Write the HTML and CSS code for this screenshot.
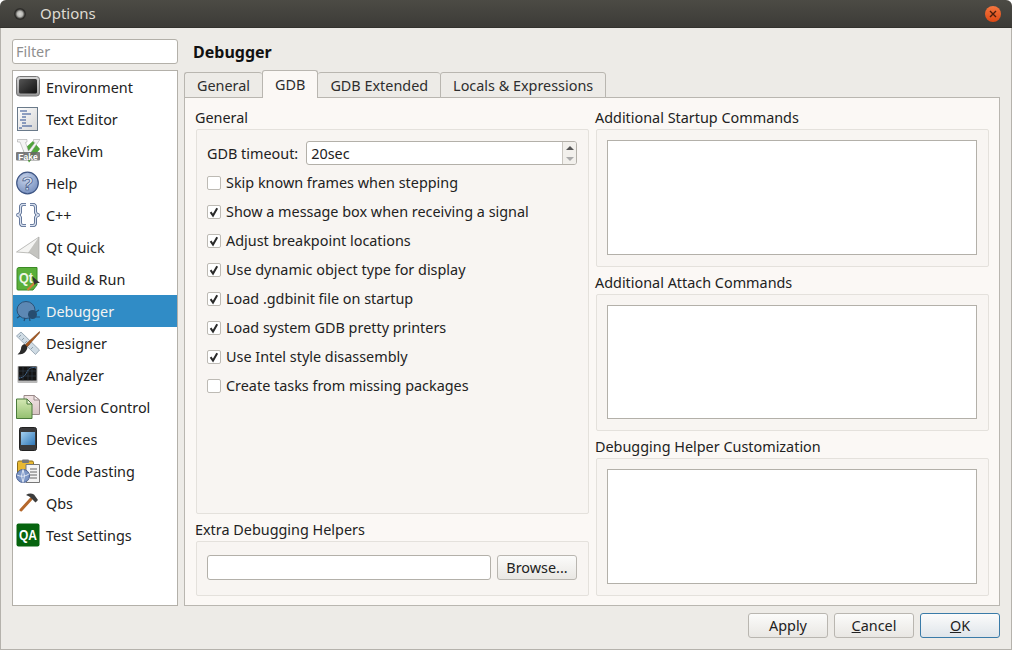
FILE: index.html
```html
<!DOCTYPE html>
<html lang="en">
	<head>
		<meta charset="UTF-8" />
		<title>Options</title>
		<link rel="stylesheet" href="styles.css">
	</head>
	<body>
		<svg class="defs" width="0" height="0">
			<defs>
				<linearGradient id="gScreen" x1="0" y1="0" x2="1" y2="1"><stop offset="0" stop-color="#555"/><stop offset="1" stop-color="#111"/></linearGradient>
				<linearGradient id="gFrame" x1="0" y1="0" x2="0" y2="1"><stop offset="0" stop-color="#d8d8d8"/><stop offset="1" stop-color="#999"/></linearGradient>
				<linearGradient id="gPage" x1="0" y1="0" x2="1" y2="1"><stop offset="0" stop-color="#fff"/><stop offset="1" stop-color="#d4d4d4"/></linearGradient>
				<radialGradient id="gHelp" cx="0.4" cy="0.3" r="0.8"><stop offset="0" stop-color="#c6d3ea"/><stop offset="1" stop-color="#6f89bb"/></radialGradient>
				<linearGradient id="gGreen" x1="0" y1="0" x2="0" y2="1"><stop offset="0" stop-color="#d4e8b4"/><stop offset="1" stop-color="#94c070"/></linearGradient>
				<linearGradient id="gPink" x1="0" y1="0" x2="0" y2="1"><stop offset="0" stop-color="#f2e4e4"/><stop offset="1" stop-color="#d8c4c4"/></linearGradient>
				<linearGradient id="gTablet" x1="0" y1="0" x2="1" y2="1"><stop offset="0" stop-color="#a4d0f0"/><stop offset="1" stop-color="#2f77b8"/></linearGradient>
				<symbol id="tick" viewBox="0 0 14 14"><path d="M3.6 7.2 L6 10.6 L10.2 3.2" fill="none" stroke="#2a2a2a" stroke-width="2"/></symbol>
			</defs>
		</svg>

		<div class="window">
			<header class="titlebar">
				<span class="app-dot"></span>
				<span class="title">Options</span>
				<span class="close"><svg width="8" height="8" viewBox="0 0 8 8"><path d="M1 1 L7 7 M7 1 L1 7" stroke="#4a1d0c" stroke-width="1.4"/></svg></span>
			</header>

			<div class="body">
				<div class="content">
					<aside class="sidebar">
						<input class="filter" type="text" placeholder="Filter" />
						<ul class="nav">
							<li>
								<svg class="icon" viewBox="0 0 24 24"><rect x="0.5" y="1.5" width="23" height="19.5" rx="3" fill="url(#gFrame)" stroke="#777"/><rect x="3" y="4" width="18" height="14.5" rx="1.5" fill="url(#gScreen)"/></svg>
								Environment
							</li>
							<li>
								<svg class="icon" viewBox="0 0 24 24"><rect x="1.5" y="0.5" width="20" height="23" fill="url(#gPage)" stroke="#6a7a8a"/><path d="M4 4h7M6 7h9M6 10h4M4 13h6M6 16h4M6 19h10M3 21h3" stroke="#2a4d8f" stroke-width="1.2"/></svg>
								Text Editor
							</li>
							<li>
								<svg class="icon" viewBox="0 0 24 24"><path d="M7 11 L13 23.5 L24 10 L17 2 Z" fill="#4fa53a"/><path d="M1.5 0.5 H11 V3 L9.5 3.5 L12.5 12 L19 3.5 L17.5 3 V0.5 H24 L13 16 H9 L4 3 L1.5 3 Z" fill="#f4f4f4" stroke="#999" stroke-width="0.5"/><rect x="0" y="13" width="24" height="8.5" rx="1" fill="#666" opacity="0.85"/><text class="fake" x="12" y="20.6">Fake</text></svg>
								FakeVim
							</li>
							<li>
								<svg class="icon" viewBox="0 0 24 24"><circle cx="11.5" cy="12" r="10.8" fill="url(#gHelp)" stroke="#3f5684" stroke-width="1.2"/><text class="help" x="11.5" y="18.5">?</text></svg>
								Help
							</li>
							<li>
								<svg class="icon" viewBox="0 0 24 24"><path d="M10 1.5 H7 Q4.5 1.5 4.5 4.5 V8.5 Q4.5 11 1.5 12 Q4.5 13 4.5 15.5 V19.5 Q4.5 22.5 7 22.5 H10" fill="none" stroke="#4a6088" stroke-width="3"/><path d="M10 1.5 H7 Q4.5 1.5 4.5 4.5 V8.5 Q4.5 11 1.5 12 Q4.5 13 4.5 15.5 V19.5 Q4.5 22.5 7 22.5 H10" fill="none" stroke="#d8e0ee" stroke-width="1.4"/><path d="M14 1.5 H17 Q19.5 1.5 19.5 4.5 V8.5 Q19.5 11 22.5 12 Q19.5 13 19.5 15.5 V19.5 Q19.5 22.5 17 22.5 H14" fill="none" stroke="#4a6088" stroke-width="3"/><path d="M14 1.5 H17 Q19.5 1.5 19.5 4.5 V8.5 Q19.5 11 22.5 12 Q19.5 13 19.5 15.5 V19.5 Q19.5 22.5 17 22.5 H14" fill="none" stroke="#d8e0ee" stroke-width="1.4"/></svg>
								C++
							</li>
							<li>
								<svg class="icon" viewBox="0 0 24 24"><path d="M0.5 17 L23 2 L23 24 L14 18 Z" fill="#e2e2de"/><path d="M0.5 17 L23 2 L12 18 Z" fill="#f4f4f2"/><path d="M12 18 L23 2 L23 24 L14 18 Z" fill="#c4c4c0"/><path d="M0.5 17 L23 2 L23 24 L14 18 Z" fill="none" stroke="#a8a8a4" stroke-width="0.7"/></svg>
								Qt Quick
							</li>
							<li>
								<svg class="icon" viewBox="0 0 24 24"><path d="M3 0.5 H21 V18 L17 23 H2 Q1 23 1 22 V2.5 Q1 0.5 3 0.5 Z" fill="#5aaf3a" stroke="#3b8a25"/><text class="qt" x="10" y="16" textLength="14" lengthAdjust="spacingAndGlyphs">Qt</text><path d="M11.5 23 L20.5 14" stroke="#d0803a" stroke-width="2.2"/><path d="M16 9 L24 16 L20.5 16 L18.5 18 Z" fill="#333"/></svg>
								Build &amp; Run
							</li>
							<li class="active">
								<svg class="icon" viewBox="0 0 24 24"><ellipse cx="10" cy="11" rx="9" ry="8.5" fill="#5d88b4" stroke="#2c5378"/><circle cx="16.5" cy="15.5" r="4.5" fill="#274d70"/><path d="M1 19 L4 17 M8 22 L9 19 M14 22 L13.5 19 M20 18 L24 18 M20 13 L23 11" stroke="#274d70" stroke-width="1.2"/></svg>
								Debugger
							</li>
							<li>
								<svg class="icon" viewBox="0 0 24 24"><path d="M0.5 5 L5 1 L23.5 19 L19.5 23.5 Z" fill="#cfdbe4" stroke="#8a9aa8" stroke-width="0.8"/><path d="M5 4 L3 6 M8 7 L6 9 M11 10 L9 12 M14 13 L12 15 M17 16 L15 18" stroke="#7e8f9c" stroke-width="0.8"/><path d="M23.5 0.5 L10 13 L8 16 L11 16 L23.5 2 Z" fill="#a85a22" stroke="#6e3810" stroke-width="0.5"/><path d="M8.5 13 Q5 14 5 18 Q4.5 21 1.5 23.5 Q8 23.5 10 20 Q12 17 11 15.5 Z" fill="#2a2a2a"/></svg>
								Designer
							</li>
							<li>
								<svg class="icon" viewBox="0 0 24 24"><rect x="1.5" y="3" width="20" height="17" rx="1" fill="#b8b8b8"/><rect x="2.5" y="3.5" width="18" height="14" fill="#141414"/><path d="M3 15 Q8 15 11 9 T20 5" fill="none" stroke="#5a8fc8" stroke-width="1" stroke-dasharray="1.4 0.8"/><path d="M7 3.5v14M12 3.5v14M16 3.5v14M2.5 8h18M2.5 13h18" stroke="#3a4a5a" stroke-width="0.5"/></svg>
								Analyzer
							</li>
							<li>
								<svg class="icon" viewBox="0 0 24 24"><path d="M8 0.5 H18 L23.5 5 V19.5 H8 Z" fill="url(#gPink)" stroke="#9a8a8a"/><path d="M18 0.5 V5 H23.5 Z" fill="#f6f0f0" stroke="#9a8a8a"/><path d="M0.5 4 H11 L16 9 V23.5 H0.5 Z" fill="url(#gGreen)" stroke="#4a7a3a"/><path d="M11 4 V9 H16 Z" fill="#eaf4d8" stroke="#4a7a3a"/></svg>
								Version Control
							</li>
							<li>
								<svg class="icon" viewBox="0 0 24 24"><rect x="3.5" y="0.5" width="17" height="23" rx="2" fill="#3a3a3c" stroke="#222"/><rect x="5" y="5" width="14" height="13" fill="url(#gTablet)"/></svg>
								Devices
							</li>
							<li>
								<svg class="icon" viewBox="0 0 24 24"><rect x="1.5" y="2" width="16" height="17" rx="1.5" fill="#e8b830" stroke="#8a6c18"/><rect x="6" y="0.5" width="7" height="3.5" rx="1" fill="#777"/><path d="M10 5.5 H23.5 V23.5 H10 Z" fill="#f4f4f4" stroke="#777"/><path d="M14 10h7M14 13h7M14 16h7M14 19h7" stroke="#555" stroke-width="0.9"/><circle cx="7" cy="17" r="6.5" fill="#7d97c6" stroke="#4a6091"/><path d="M1 16 Q7 19 13 15 M7 10.5 Q4 17 7 23.5 M7 10.5 Q10 17 7 23.5" fill="none" stroke="#e4ebf6" stroke-width="0.9"/></svg>
								Code Pasting
							</li>
							<li>
								<svg class="icon" viewBox="0 0 24 24"><path d="M5 19 L15 8" stroke="#b5682c" stroke-width="3" stroke-linecap="round"/><path d="M10 4 Q14 1.5 18 3.5 L22 9 L19.5 11.5 L16 8 Q13.5 5 10 4 Z" fill="#3c3c3c"/></svg>
								Qbs
							</li>
							<li>
								<svg class="icon" viewBox="0 0 24 24"><rect x="0.5" y="0.5" width="23" height="23" rx="2" fill="#06640f"/><text class="qa" x="12" y="17" textLength="18" lengthAdjust="spacingAndGlyphs">QA</text></svg>
								Test Settings
							</li>
						</ul>
					</aside>

					<main class="main">
						<h1>Debugger</h1>
						<div class="tabs">
							<span class="tab">General</span>
							<span class="tab current">GDB</span>
							<span class="tab">GDB Extended</span>
							<span class="tab">Locals &amp; Expressions</span>
						</div>
						<div class="panel">
							<div class="column">
								<section class="group grow">
									<h2>General</h2>
									<div class="box general">
										<div class="timeout">
											<label>GDB timeout:</label>
											<div class="spin">
												<span class="spin-value">20sec</span>
												<span class="spin-arrows"><i class="up"></i><i class="down"></i></span>
											</div>
										</div>
										<div class="check"><span class="mark"></span>Skip known frames when stepping</div>
										<div class="check"><span class="mark"><svg width="14" height="14"><use href="#tick"/></svg></span>Show a message box when receiving a signal</div>
										<div class="check"><span class="mark"><svg width="14" height="14"><use href="#tick"/></svg></span>Adjust breakpoint locations</div>
										<div class="check"><span class="mark"><svg width="14" height="14"><use href="#tick"/></svg></span>Use dynamic object type for display</div>
										<div class="check"><span class="mark"><svg width="14" height="14"><use href="#tick"/></svg></span>Load .gdbinit file on startup</div>
										<div class="check"><span class="mark"><svg width="14" height="14"><use href="#tick"/></svg></span>Load system GDB pretty printers</div>
										<div class="check"><span class="mark"><svg width="14" height="14"><use href="#tick"/></svg></span>Use Intel style disassembly</div>
										<div class="check"><span class="mark"></span>Create tasks from missing packages</div>
									</div>
								</section>
								<section class="group">
									<h2>Extra Debugging Helpers</h2>
									<div class="box helpers">
										<div class="path-input"></div>
										<button class="btn browse">Browse...</button>
									</div>
								</section>
							</div>
							<div class="column">
								<section class="group">
									<h2>Additional Startup Commands</h2>
									<div class="box editor-box"><div class="editor h115"></div></div>
								</section>
								<section class="group">
									<h2>Additional Attach Commands</h2>
									<div class="box editor-box"><div class="editor h114"></div></div>
								</section>
								<section class="group">
									<h2>Debugging Helper Customization</h2>
									<div class="box editor-box"><div class="editor h115"></div></div>
								</section>
							</div>
						</div>
					</main>
				</div>

				<footer class="buttons">
					<button class="btn wide">Apply</button>
					<button class="btn wide"><u>C</u>ancel</button>
					<button class="btn wide ok"><u>O</u>K</button>
				</footer>
			</div>
		</div>
	</body>
</html>
```

FILE: styles.css
```css
* {
	box-sizing: border-box;
	margin: 0;
	padding: 0;
}

html,
body {
	width: 1012px;
	height: 650px;
	overflow: hidden;
	background: #fff;
}

body {
	font-family: "Noto Sans", sans-serif;
	font-size: 14.4px;
	color: #222;
}

.defs {
	position: absolute;
}

.window {
	height: 650px;
	display: flex;
	flex-direction: column;
	background: #edebe7;
	border-radius: 6px 6px 0 0;
	overflow: hidden;
}

.titlebar {
	height: 28px;
	flex: none;
	display: flex;
	align-items: center;
	background: linear-gradient(#4c4b45, #3c3b37);
	border-bottom: 1px solid #33322e;
	padding: 0 11px 0 14px;
}

.app-dot {
	width: 12px;
	height: 12px;
	border-radius: 50%;
	background: radial-gradient(circle, #d8d8d4 0, #b8b8b4 32%, #2d2c29 58%);
}

.title {
	margin-left: 14px;
	margin-bottom: 2px;
	color: #dfdbd2;
	font-size: 15px;
}

.close {
	margin-left: auto;
	width: 16px;
	height: 16px;
	border-radius: 50%;
	background: linear-gradient(#f4763f, #dd4814);
	display: flex;
	align-items: center;
	justify-content: center;
}

.body {
	flex: 1;
	display: flex;
	flex-direction: column;
	border: 1px solid #b5b2ac;
	border-top: none;
	padding: 11px 11px 11px;
}

.content {
	height: 567px;
	display: flex;
	gap: 6px;
}

.sidebar {
	width: 166px;
	flex: none;
	display: flex;
	flex-direction: column;
	gap: 6px;
}

.filter {
	height: 25px;
	border: 1px solid #b3b0a9;
	border-radius: 3px;
	padding: 0 3px;
	font: inherit;
	background: #fff;
}

.filter::placeholder {
	color: #8f8f8f;
	opacity: 1;
}

.nav {
	flex: 1;
	list-style: none;
	background: #fff;
	border: 1px solid #b3b0a9;
}

.nav li {
	height: 32px;
	display: flex;
	align-items: center;
	gap: 6px;
	padding-left: 3px;
	white-space: nowrap;
}

.nav li.active {
	background: #308cc6;
	color: #f4f4f2;
}

.icon {
	width: 24px;
	height: 24px;
	flex: none;
}

.icon text {
	font-family: "Liberation Sans", sans-serif;
	text-anchor: middle;
	font-weight: bold;
}

.fake {
	font-size: 8.5px;
	fill: #fff;
}

.help {
	font-size: 19px;
	fill: #d6e0f0;
	stroke: #3f5684;
	stroke-width: 0.7px;
}

.qt {
	font-size: 14px;
	fill: #eef6e4;
}

.qa {
	font-size: 14px;
	fill: #fff;
}

.main {
	flex: 1;
	display: flex;
	flex-direction: column;
	min-width: 0;
}

h1 {
	font-size: 16px;
	font-weight: bold;
	height: 31px;
	line-height: 26px;
	padding-left: 9px;
	color: #111;
}

.tabs {
	display: flex;
	height: 28px;
	position: relative;
	z-index: 1;
	margin-bottom: -1px;
}

.tab {
	height: 26px;
	margin-top: 2px;
	padding: 0 12px;
	border: 1px solid #b9b6b0;
	border-right: none;
	border-radius: 3px 3px 0 0;
	background: #edebe7;
	line-height: 25px;
	color: #2e2e2e;
}

.tab:last-child {
	border-right: 1px solid #b9b6b0;
}

.tab.current {
	height: 28px;
	margin-top: 0;
	background: #fbf8f5;
	border-right: 1px solid #b9b6b0;
	border-bottom: none;
	padding: 0 12px;
	line-height: 27px;
}

.tab.current + .tab {
	border-left: none;
}

.panel {
	flex: 1;
	display: grid;
	grid-template-columns: 393px 393px;
	column-gap: 7px;
	padding: 11px 11px 9px;
	background: #fbf8f5;
	border: 1px solid #b9b6b0;
}

.column {
	display: flex;
	flex-direction: column;
	justify-content: space-between;
}

.group h2 {
	font-size: 14.4px;
	font-weight: normal;
	height: 20px;
	line-height: 18px;
	margin-left: -1px;
	color: #222;
}

.group.grow {
	flex: 1;
	display: flex;
	flex-direction: column;
	margin-bottom: 7px;
}

.box {
	background: #f8f5f2;
	border: 1px solid #e4e1dc;
	border-radius: 2px;
}

.general {
	flex: 1;
	padding: 11px 11px 0 10px;
}

.timeout {
	display: flex;
	align-items: center;
	gap: 8px;
	height: 24px;
	margin-bottom: 3px;
}

.spin {
	flex: 1;
	height: 24px;
	display: flex;
	background: #fff;
	border: 1px solid #b3b0a9;
	border-radius: 3px;
}

.spin-value {
	flex: 1;
	padding-left: 4px;
	line-height: 24px;
}

.spin-arrows {
	width: 14px;
	border-left: 1px solid #c9c6c0;
	background: #f2f0ec;
	display: flex;
	flex-direction: column;
	align-items: center;
	justify-content: center;
	gap: 7px;
	border-radius: 0 2px 2px 0;
}

.spin-arrows i {
	width: 0;
	height: 0;
	border-left: 4px solid transparent;
	border-right: 4px solid transparent;
}

.up {
	border-bottom: 4px solid #555;
}

.down {
	border-top: 4px solid #aaa;
}

.check {
	height: 29px;
	display: flex;
	align-items: center;
	gap: 5px;
	white-space: nowrap;
}

.mark {
	width: 14px;
	height: 14px;
	flex: none;
	background: #fff;
	border: 1px solid #bdbab4;
	border-radius: 2px;
	position: relative;
}

.mark svg {
	position: absolute;
	left: -1px;
	top: -1px;
}

.helpers {
	height: 55px;
	display: flex;
	align-items: center;
	gap: 6px;
	padding: 0 11px 2px 10px;
}

.path-input {
	flex: 1;
	height: 25px;
	background: #fff;
	border: 1px solid #b3b0a9;
	border-radius: 3px;
}

.btn {
	height: 25px;
	font: inherit;
	color: #222;
	border: 1px solid #b9b6b0;
	border-radius: 3px;
	background: linear-gradient(#fbfbfa, #e9e7e3);
}

.browse {
	width: 80px;
}

.editor-box {
	padding: 10px 11px 11px 10px;
}

.editor {
	background: #fff;
	border: 1px solid #b3b0a9;
}

.h115 {
	height: 115px;
}

.h114 {
	height: 114px;
}

.buttons {
	display: flex;
	justify-content: flex-end;
	gap: 6px;
	margin-top: 7px;
}

.wide {
	width: 80px;
}

.ok {
	border-color: #3a7ba8;
	background: linear-gradient(#fbfbfb, #dfe5ea);
}
```
